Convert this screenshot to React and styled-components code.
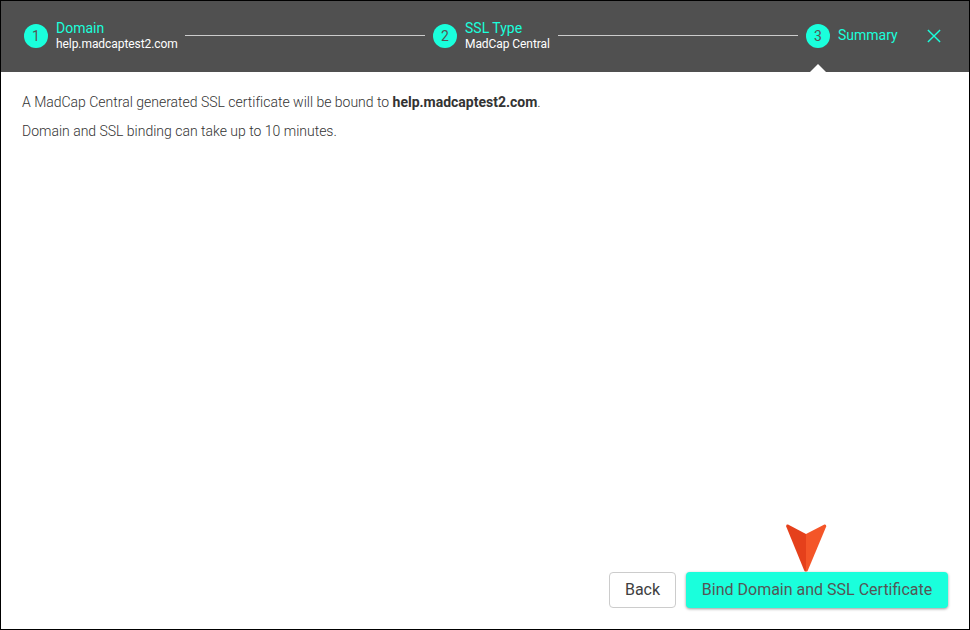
import React from "react";
import styled, { createGlobalStyle } from "styled-components";

const GlobalStyle = createGlobalStyle`
  * { box-sizing: border-box; }
  body { margin: 0; font-family: Roboto, sans-serif; color: #333; }
`;
const Dialog = styled.main`
  width: 970px; height: 630px; display: flex; flex-direction: column;
  border: 1px solid #000; background: #fff;
`;
const Header = styled.header`
  height: 71px; flex: none; display: flex; align-items: center;
  padding: 0 27px 0 23px; background: #505050;
`;
const Step = styled.div`
  position: relative; display: flex; align-items: center; gap: 8px; flex: none;
  width: ${(p) => p.$width}px; height: 71px; padding-bottom: 1px;
`;
const Badge = styled.span`
  width: 24px; height: 24px; border-radius: 50%; background: #1affdc; color: #555;
  font-size: 14px; line-height: 24px; text-align: center; flex: none;
`;
const Labels = styled.div`
  display: flex; flex-direction: column; white-space: nowrap;
`;
const Title = styled.span`
  font-size: 14px; line-height: 16px; color: #1affdc; margin-top: -1px; padding-bottom: 1px;
`;
const Detail = styled.span`
  font-size: 12px; line-height: 14px; color: #fff; letter-spacing: -0.07px;
`;
const Connector = styled.div`
  flex: none; width: 240px; height: 1px; margin: 0 8px 2px; background: #ccc;
`;
const Pointer = styled.span`
  position: absolute; left: 4px; bottom: 0; width: 16px; height: 8px;
  background: #fff; clip-path: polygon(50% 0, 100% 100%, 0 100%);
`;
const Close = styled.button`
  display: flex; margin: 0 0 1px auto; padding: 0; border: 0; background: none; color: #1affdc;
`;
const Content = styled.section`
  flex: 1; padding: 16px 21px;
`;
const Message = styled.p`
  margin: 0; font-size: 14px; line-height: 29px; font-weight: 300; letter-spacing: -0.008px;
  strong { font-weight: 700; }
`;
const Footer = styled.footer`
  display: flex; justify-content: flex-end; gap: 10px; padding: 0 21px 21px;
`;
const Button = styled.button`
  position: relative; width: ${(p) => p.$width}px; height: 36px; padding: 0 0 2px; border-radius: 4px;
  font: 400 16px Roboto, sans-serif; white-space: nowrap;
  color: ${(p) => (p.$primary ? "#555" : "#404040")};
  background: ${(p) => (p.$primary ? "#1affdc" : "#fff")};
  border: ${(p) => (p.$primary ? "0" : "1px solid #ccc")};
  box-shadow: ${(p) => (p.$primary ? "0 1px 3px rgba(0,0,0,.4)" : "none")};
`;
const Marker = styled.svg`
  position: absolute; left: 100px; top: -48px;
`;

export default function App() {
  return (
    <>
      <GlobalStyle />
      <Dialog>
        <Header>
          <Step $width={153}>
            <Badge>1</Badge>
            <Labels><Title>Domain</Title><Detail>help.madcaptest2.com</Detail></Labels>
          </Step>
          <Connector />
          <Step $width={117}>
            <Badge>2</Badge>
            <Labels><Title>SSL Type</Title><Detail>MadCap Central</Detail></Labels>
          </Step>
          <Connector />
          <Step $width={92}>
            <Badge>3</Badge>
            <Labels><Title>Summary</Title></Labels>
            <Pointer />
          </Step>
          <Close aria-label="Close">
            <svg width="16" height="16" viewBox="0 0 16 16" fill="none" stroke="currentColor" strokeWidth="1.4">
              <path d="M1.9 1.9L14.1 14.1M14.1 1.9L1.9 14.1" />
            </svg>
          </Close>
        </Header>
        <Content>
          <Message>A MadCap Central generated SSL certificate will be bound to <strong>help.madcaptest2.com</strong>.</Message>
          <Message>Domain and SSL binding can take up to 10 minutes.</Message>
        </Content>
        <Footer>
          <Button $width={67}>Back</Button>
          <Button $primary $width={262}>
            Bind Domain and SSL Certificate
            <Marker width="41" height="48" viewBox="0 0 41 48">
              <path d="M20 10V47.6Q18.8 47.6 18.2 46.4L.2 2.5Q-.1.3 2 .6Z" fill="#e5401b" />
              <path d="M20 10V47.6Q21.2 47.6 21.8 46.4L40.2 2.5Q40.5.3 38.4.6Z" fill="#f45528" />
            </Marker>
          </Button>
        </Footer>
      </Dialog>
    </>
  );
}
